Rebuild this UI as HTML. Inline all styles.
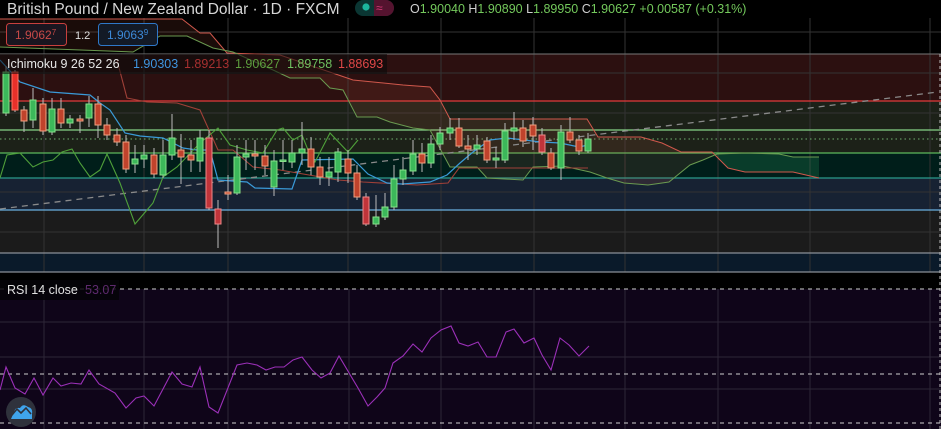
<!DOCTYPE html>
<html><head><meta charset="utf-8"><style>
html,body{margin:0;padding:0;background:#000;width:941px;height:429px;overflow:hidden}
svg{display:block}
text{font-family:"Liberation Sans",sans-serif}
</style></head><body>
<svg width="941" height="429" viewBox="0 0 941 429" xmlns="http://www.w3.org/2000/svg">
<rect width="941" height="429" fill="#000"/>
<rect x="0" y="54" width="941" height="47" fill="#2c1010"/>
<rect x="0" y="101" width="941" height="52" fill="#1c2118"/>
<rect x="0" y="153" width="941" height="25" fill="#001e1a"/>
<rect x="0" y="178" width="941" height="32" fill="#172233"/>
<rect x="0" y="210" width="941" height="43" fill="#1b1b1b"/>
<rect x="0" y="253" width="941" height="19" fill="#0a1a2a"/>
<rect x="0" y="289" width="941" height="140" fill="#0f0519"/>
<g stroke="#333" stroke-width="1">
<line x1="44" y1="18" x2="44" y2="272"/><line x1="144" y1="18" x2="144" y2="272"/><line x1="228" y1="18" x2="228" y2="272"/><line x1="348" y1="18" x2="348" y2="272"/><line x1="441" y1="18" x2="441" y2="272"/><line x1="534" y1="18" x2="534" y2="272"/><line x1="625" y1="18" x2="625" y2="272"/><line x1="718" y1="18" x2="718" y2="272"/><line x1="810" y1="18" x2="810" y2="272"/><line x1="930" y1="18" x2="930" y2="272"/>
<line x1="0" y1="32" x2="941" y2="32"/><line x1="0" y1="73" x2="941" y2="73"/><line x1="0" y1="113" x2="941" y2="113"/><line x1="0" y1="192" x2="941" y2="192"/><line x1="0" y1="232" x2="941" y2="232"/>
</g>
<g stroke="#2e2638" stroke-width="1">
<line x1="44" y1="289" x2="44" y2="429"/><line x1="144" y1="289" x2="144" y2="429"/><line x1="228" y1="289" x2="228" y2="429"/><line x1="349" y1="289" x2="349" y2="429"/><line x1="441" y1="289" x2="441" y2="429"/><line x1="534" y1="289" x2="534" y2="429"/><line x1="625" y1="289" x2="625" y2="429"/><line x1="718" y1="289" x2="718" y2="429"/><line x1="810" y1="289" x2="810" y2="429"/><line x1="930" y1="289" x2="930" y2="429"/>
<line x1="0" y1="322" x2="941" y2="322"/><line x1="0" y1="357" x2="941" y2="357"/><line x1="0" y1="389" x2="941" y2="389"/>
</g>
<line x1="0" y1="54" x2="941" y2="54" stroke="#777" stroke-width="1"/>
<line x1="0" y1="101" x2="941" y2="101" stroke="#e23b3b" stroke-width="1.3"/>
<line x1="0" y1="130" x2="941" y2="130" stroke="#86d486" stroke-width="1.3"/>
<line x1="0" y1="139" x2="941" y2="139" stroke="#6fb06f" stroke-width="1" stroke-dasharray="1.5,3"/>
<line x1="0" y1="153" x2="941" y2="153" stroke="#5cb85c" stroke-width="1.3"/>
<line x1="0" y1="178" x2="941" y2="178" stroke="#2a9a8a" stroke-width="1.3"/>
<line x1="0" y1="210" x2="941" y2="210" stroke="#6ab0e0" stroke-width="1.3"/>
<line x1="0" y1="253" x2="941" y2="253" stroke="#8a8f98" stroke-width="1.3"/>
<line x1="0" y1="272" x2="941" y2="272" stroke="#8a8f98" stroke-width="1.3"/>
<line x1="940" y1="54" x2="940" y2="429" stroke="#bbb" stroke-width="1" stroke-dasharray="3,3"/>
<clipPath id="cr"><rect x="0" y="0" width="716" height="429"/></clipPath>
<clipPath id="cg"><rect x="716" y="0" width="225" height="429"/></clipPath>
<polygon clip-path="url(#cr)" fill="rgba(200,90,70,0.13)" points="0,19 182,19 200,33 210,33 227,53 280,55 353,80 403,85 430,87 440,100 450,119 587,119 598,137 641,137 662,143 681,152 712,152 728,168 745,172 793,172 819,178 819,157 793,157 779,154 745,153 717,154 703,160 690,165 669,182 648,185 624,183 607,178 590,172 563,166 533,167 523,180 487,178 477,167 450,167 430,130 413,128 390,122 377,117 357,117 343,90 330,88 320,78 290,78 273,70 233,52 213,48 187,36 160,36 133,52 0,47"/>
<polygon clip-path="url(#cg)" fill="rgba(40,170,100,0.22)" points="0,19 182,19 200,33 210,33 227,53 280,55 353,80 403,85 430,87 440,100 450,119 587,119 598,137 641,137 662,143 681,152 712,152 728,168 745,172 793,172 819,178 819,157 793,157 779,154 745,153 717,154 703,160 690,165 669,182 648,185 624,183 607,178 590,172 563,166 533,167 523,180 487,178 477,167 450,167 430,130 413,128 390,122 377,117 357,117 343,90 330,88 320,78 290,78 273,70 233,52 213,48 187,36 160,36 133,52 0,47"/>
<line x1="0" y1="209" x2="938" y2="92" stroke="#8a8a8a" stroke-width="1.3" stroke-dasharray="6,5"/>
<polyline fill="none" stroke="#d0584c" stroke-width="1" points="0,19 182,19 200,33 210,33 227,53 280,55 353,80 403,85 430,87 440,100 450,119 587,119 598,137 641,137 662,143 681,152 712,152 728,168 745,172 793,172 819,178"/>
<polyline fill="none" stroke="#6a9a50" stroke-width="1" points="0,47 133,52 160,36 187,36 213,48 233,52 273,70 290,78 320,78 330,88 343,90 357,117 377,117 390,122 413,128 430,130 450,167 477,167 487,178 523,180 533,167 563,166 590,172 607,178 624,183 648,185 669,182 690,165 703,160 717,154 745,153 779,154 793,157 819,157"/>
<polyline fill="none" stroke="#a04038" stroke-width="1.1" points="117,60 127,98 147,102 177,103 200,110 218,150 233,150 253,167 280,170 338,180 363,182 417,185 448,183 459,168 588,168"/>
<polyline fill="none" stroke="#3a9ad8" stroke-width="1.2" points="0,60 20,82 50,92 90,95 100,103 110,110 125,133 140,136 163,138 183,148 197,150 210,150 218,180 247,182 255,188 292,189 302,160 353,159 368,174 387,183 402,184 430,182 447,175 460,163 473,152 490,140 507,138 541,142 560,143 579,147 588,145"/>
<polyline fill="none" stroke="#4fa03a" stroke-width="1.1" points="0,178 7,155 20,153 33,167 43,162 53,160 62,152 72,149 80,163 90,177 100,170 107,154 120,183 135,224 153,203 163,177 177,167 200,143 218,128 230,145 247,150 263,153 277,130 283,128 293,140 302,135 310,155 315,162 330,133 348,152 358,140"/>
<g stroke-width="1">
<g stroke="#bbb">
<line x1="6" y1="66" x2="6" y2="116"/><line x1="15" y1="70" x2="15" y2="112"/><line x1="24" y1="106" x2="24" y2="132"/><line x1="33" y1="88" x2="33" y2="128"/><line x1="43" y1="98" x2="43" y2="135"/><line x1="52" y1="98" x2="52" y2="135"/><line x1="61" y1="98" x2="61" y2="128"/><line x1="70" y1="115" x2="70" y2="128"/><line x1="80" y1="115" x2="80" y2="133"/><line x1="89" y1="96" x2="89" y2="127"/><line x1="98" y1="96" x2="98" y2="138"/><line x1="107" y1="118" x2="107" y2="140"/><line x1="117" y1="128" x2="117" y2="146"/><line x1="126" y1="135" x2="126" y2="173"/><line x1="135" y1="145" x2="135" y2="173"/><line x1="144" y1="145" x2="144" y2="168"/><line x1="154" y1="148" x2="154" y2="178"/><line x1="163" y1="140" x2="163" y2="178"/><line x1="172" y1="114" x2="172" y2="160"/><line x1="181" y1="134" x2="181" y2="184"/><line x1="191" y1="140" x2="191" y2="172"/><line x1="200" y1="130" x2="200" y2="172"/><line x1="209" y1="130" x2="209" y2="210"/><line x1="218" y1="200" x2="218" y2="248"/><line x1="228" y1="175" x2="228" y2="200"/><line x1="237" y1="145" x2="237" y2="195"/><line x1="246" y1="140" x2="246" y2="170"/><line x1="255" y1="140" x2="255" y2="170"/><line x1="265" y1="145" x2="265" y2="175"/><line x1="274" y1="150" x2="274" y2="196"/><line x1="283" y1="140" x2="283" y2="170"/><line x1="292" y1="140" x2="292" y2="168"/><line x1="302" y1="122" x2="302" y2="165"/><line x1="311" y1="137" x2="311" y2="175"/><line x1="320" y1="157" x2="320" y2="185"/><line x1="329" y1="157" x2="329" y2="186"/><line x1="338" y1="148" x2="338" y2="182"/><line x1="348" y1="150" x2="348" y2="183"/><line x1="357" y1="165" x2="357" y2="200"/><line x1="366" y1="193" x2="366" y2="226"/><line x1="376" y1="195" x2="376" y2="227"/><line x1="385" y1="193" x2="385" y2="220"/><line x1="394" y1="165" x2="394" y2="210"/><line x1="403" y1="157" x2="403" y2="185"/><line x1="413" y1="140" x2="413" y2="175"/><line x1="422" y1="143" x2="422" y2="172"/><line x1="431" y1="135" x2="431" y2="168"/><line x1="440" y1="127" x2="440" y2="150"/><line x1="450" y1="118" x2="450" y2="140"/><line x1="459" y1="118" x2="459" y2="148"/><line x1="468" y1="135" x2="468" y2="160"/><line x1="477" y1="135" x2="477" y2="155"/><line x1="487" y1="137" x2="487" y2="163"/><line x1="496" y1="147" x2="496" y2="168"/><line x1="505" y1="123" x2="505" y2="163"/><line x1="514" y1="112" x2="514" y2="140"/><line x1="523" y1="120" x2="523" y2="147"/><line x1="533" y1="117" x2="533" y2="150"/><line x1="542" y1="128" x2="542" y2="155"/><line x1="551" y1="148" x2="551" y2="170"/><line x1="561" y1="125" x2="561" y2="180"/><line x1="570" y1="117" x2="570" y2="143"/><line x1="579" y1="135" x2="579" y2="155"/><line x1="588" y1="133" x2="588" y2="153"/>
</g>
<g fill="#3cb85a" stroke="#86e08a">
<rect x="3" y="72" width="6" height="41"/><rect x="30" y="100" width="6" height="20"/><rect x="49" y="109" width="6" height="23"/><rect x="67" y="119" width="6" height="4"/><rect x="86" y="104" width="6" height="14"/><rect x="132" y="159" width="6" height="5"/><rect x="141" y="155" width="6" height="4"/><rect x="160" y="155" width="6" height="20"/><rect x="169" y="138" width="6" height="17"/><rect x="197" y="138" width="6" height="23"/><rect x="234" y="157" width="6" height="36"/><rect x="243" y="154" width="6" height="3"/><rect x="271" y="161" width="6" height="26"/><rect x="280" y="160" width="6" height="1.5"/><rect x="289" y="153" width="6" height="9"/><rect x="299" y="149" width="6" height="4"/><rect x="326" y="172" width="6" height="5"/><rect x="335" y="152" width="6" height="20"/><rect x="373" y="217" width="6" height="7"/><rect x="382" y="207" width="6" height="10"/><rect x="391" y="179" width="6" height="28"/><rect x="400" y="170" width="6" height="9"/><rect x="410" y="154" width="6" height="17"/><rect x="428" y="144" width="6" height="19"/><rect x="437" y="133" width="6" height="11"/><rect x="447" y="128" width="6" height="5"/><rect x="474" y="145" width="6" height="4"/><rect x="493" y="158" width="6" height="2"/><rect x="502" y="131" width="6" height="29"/><rect x="511" y="128" width="6" height="3"/><rect x="558" y="132" width="6" height="36"/><rect x="585" y="139" width="6" height="12"/>
</g>
<g fill="#c0432c" stroke="#f2a080">
<rect x="21" y="110" width="6" height="11"/><rect x="40" y="104" width="6" height="27"/><rect x="58" y="109" width="6" height="14"/><rect x="77" y="119" width="6" height="2"/><rect x="95" y="104" width="6" height="21"/><rect x="104" y="125" width="6" height="10"/><rect x="114" y="135" width="6" height="7"/><rect x="123" y="142" width="6" height="27"/><rect x="151" y="155" width="6" height="19"/><rect x="178" y="150" width="6" height="7"/><rect x="188" y="155" width="6" height="5"/><rect x="225" y="192" width="6" height="2"/><rect x="252" y="154" width="6" height="2"/><rect x="262" y="156" width="6" height="10"/><rect x="308" y="149" width="6" height="18"/><rect x="317" y="167" width="6" height="10"/><rect x="345" y="159" width="6" height="14"/><rect x="354" y="173" width="6" height="24"/><rect x="419" y="154" width="6" height="9"/><rect x="456" y="128" width="6" height="18"/><rect x="465" y="146" width="6" height="3"/><rect x="484" y="141" width="6" height="19"/><rect x="520" y="128" width="6" height="13"/><rect x="530" y="125" width="6" height="11"/><rect x="548" y="153" width="6" height="15"/><rect x="567" y="132" width="6" height="8"/><rect x="576" y="140" width="6" height="11"/>
</g>
<g fill="#c0343a" stroke="#f08888">
<rect x="206" y="138" width="6" height="70"/><rect x="215" y="209" width="6" height="15"/><rect x="363" y="197" width="6" height="27"/><rect x="539" y="135" width="6" height="17"/>
</g>
<rect x="12" y="72" width="6" height="38" fill="#e8302a" stroke="#ff7060"/>
</g>
<g stroke="#cfcfcf" stroke-width="1" stroke-dasharray="4,4">
<line x1="0" y1="289" x2="941" y2="289"/><line x1="0" y1="374" x2="941" y2="374"/><line x1="0" y1="423" x2="941" y2="423"/>
</g>
<polyline fill="none" stroke="#9b30b8" stroke-width="1.1" points="0,390 6,367 15,388 25,394 34,378 43,395 53,378 61,386 71,383 81,384 89,370 99,384 115,393 126,408 136,398 144,396 154,406 172,372 182,384 192,387 200,367 209,407 218,413 237,365 247,363 257,365 266,370 275,367 284,367 293,360 302,357 312,370 321,378 330,373 339,356 358,388 368,406 377,397 385,388 393,363 403,356 413,344 422,352 431,338 441,330 451,326 459,343 468,346 478,342 487,357 496,357 506,332 514,329 524,343 534,338 542,355 551,370 560,338 569,345 579,356 589,346"/>
<rect x="0" y="280" width="119" height="20" fill="#050308" opacity="0.85"/>
<text x="7" y="294" font-size="12.5" fill="#e0e0e0">RSI 14 close</text>
<text x="85" y="294" font-size="12.5" fill="#5e2a6e">53.07</text>
<circle cx="21" cy="412" r="15" fill="#2f323c"/>
<path d="M11 419 L14 412 Q15 407 20 408 Q23 403 28 407 Q33 408 32 414 L32 419 Z" fill="#3fa4ec"/>
<polyline points="12,415 17,409 21,413 26,408 31,414" fill="none" stroke="#2f323c" stroke-width="1.6"/>
<text x="7" y="14" font-size="15.5" fill="#d6d6d6">British Pound / New Zealand Dollar · 1D · FXCM</text>
<rect x="355" y="0" width="39" height="16" rx="8" fill="#0b3633"/>
<path d="M374 0 H386 A8 8 0 0 1 386 16 H374 Z" fill="#55132f"/>
<circle cx="366" cy="7" r="3.6" fill="#1cb59e"/>
<text x="376" y="12" font-size="12" fill="#d83a78">≈</text>
<text x="410" y="13" font-size="12.5" fill="#d0d0d0">O<tspan fill="#74c95c">1.90040</tspan> H<tspan fill="#74c95c">1.90890</tspan> L<tspan fill="#74c95c">1.89950</tspan> C<tspan fill="#74c95c">1.90627</tspan> <tspan fill="#74c95c">+0.00587 (+0.31%)</tspan></text>
<rect x="6.5" y="23.5" width="60" height="22" rx="3" fill="#1a1620" stroke="#c8403e"/>
<text x="15" y="39" font-size="12" fill="#c84a48">1.9062<tspan font-size="8" dy="-4">7</tspan></text>
<text x="75" y="39" font-size="11" fill="#e0e0e0">1.2</text>
<rect x="98.5" y="23.5" width="59" height="22" rx="3" fill="#131a26" stroke="#2f78c8"/>
<text x="107" y="39" font-size="12" fill="#3d8ad8">1.9063<tspan font-size="8" dy="-4">9</tspan></text>
<rect x="0" y="54" width="387" height="20" fill="#0a0a0a" opacity="0.55"/>
<g font-size="12.5">
<text x="7" y="68" fill="#e6e6e6">Ichimoku 9 26 52 26</text>
<text x="133" y="68" fill="#3f95df">1.90303</text>
<text x="184" y="68" fill="#a83030">1.89213</text>
<text x="235" y="68" fill="#5e9e3e">1.90627</text>
<text x="287" y="68" fill="#70c060">1.89758</text>
<text x="338" y="68" fill="#e04848">1.88693</text>
</g>
</svg>
</body></html>
